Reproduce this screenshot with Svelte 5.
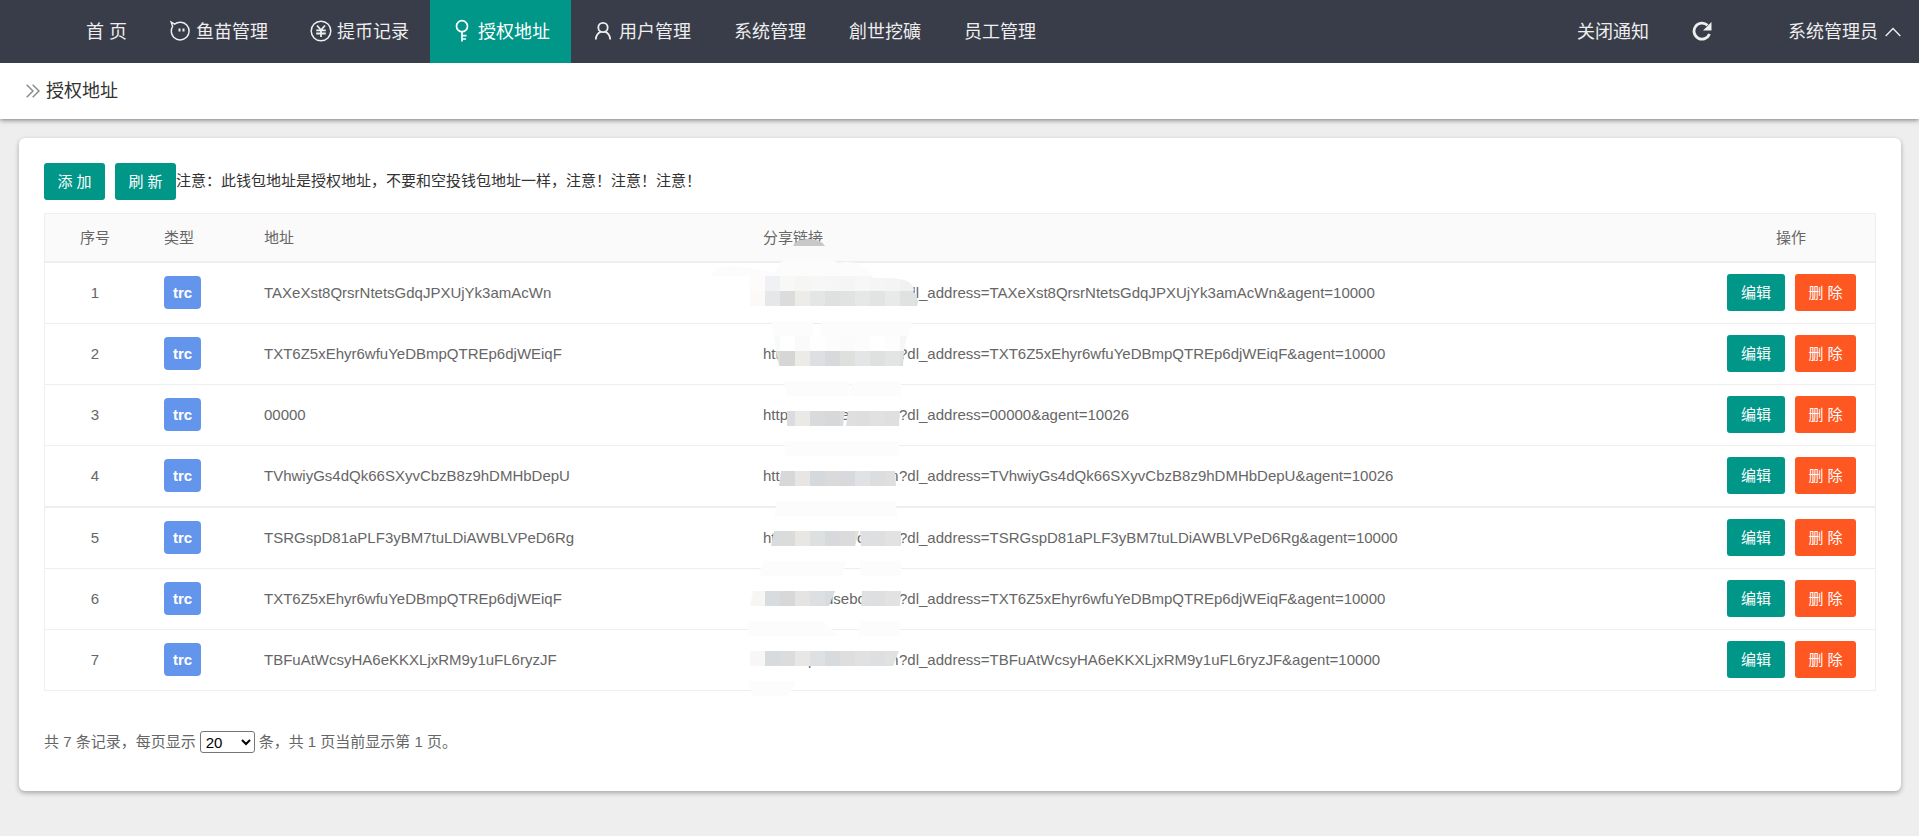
<script>
  const nav = [
    { label: '首 页' },
    { label: '鱼苗管理', icon: 'fish' },
    { label: '提币记录', icon: 'coin' },
    { label: '授权地址', icon: 'key', active: true },
    { label: '用户管理', icon: 'user' },
    { label: '系统管理' },
    { label: '創世挖礦' },
    { label: '员工管理' }
  ];

  // Each mask is drawn in a canvas whose origin is the top of its table row.
  // strips: clipping outline, top, first tile x and 15px tile colours.
  const rows = [
    {
      address: 'TAXeXst8QrsrNtetsGdqJPXUjYk3amAcWn', agent: 10000, texts: [],
      faint: ['M10 13C16 3 28 1 40 4L75 9 79 0Q81-2 85-2H134Q137-2 137 0Q163-5 173 13Z'],
      strips: [
        { clip: 'M50 13H172L173 15H190Q214 16 214 28H50Z', y: 13, x: 50, colors: ['#fdfcfa', '#eff1f4', '#f8f8f7', '#f6f6f5', '#f7f7f7', '#f6f6f6', '#f5f5f5', '#f7f7f7', '#f5f5f5', '#f4f4f4', '#f1f1f1'] },
        { clip: 'M50 28H213Q220 37 217 43H50Z', y: 28, x: 50, colors: ['#fbfaf8', '#e5e7e8', '#dcdcdc', '#eeece9', '#e3e5e7', '#dfe0e0', '#e1e2e2', '#e5e8e7', '#e2e3e3', '#e8e9e9', '#e0e1e1', '#dedfdf'] }
      ],
      cap: 'M93-17Q96-24 108-24Q121-24 125-17Z'
    },
    {
      address: 'TXT6Z5xEhyr6wfuYeDBmpQTREp6djWEiqF', agent: 10000, texts: [[63, 'htt']],
      faint: ['M72-3H113V12H75Z', 'M122-3H213L208 12H120Z'],
      strips: [
        { clip: 'M74 12H207L204 27H76Z', y: 12, x: 65, colors: ['#f6faf9', '#ffffff', '#fafafa', '#fefefe', '#fcfcfc', '#fbfbfb', '#fcfcfc', '#ffffff', '#fdfdfd', '#f6f6f6'] },
        { clip: 'M76 27H204L203 42H79Z', y: 27, x: 65, colors: ['#dcddde', '#d6d6d7', '#ecebe7', '#dedfe2', '#d8d9db', '#dfdfde', '#e3e5e6', '#dfe0e0', '#e2e5e4', '#dedfdf'] }
      ]
    },
    {
      address: '00000', agent: 10026, texts: [[63, 'http'], [141, 'e']],
      faint: ['M84-3H150L148 11H87Z', 'M152-3H201V11H149Z'],
      strips: [
        { clip: 'M87 26H145L143 41H87Z', y: 26, x: 80, colors: ['#dbdcdd', '#ebe9e6', '#d9dadc', '#d7d8d9', '#dbdcdd'] },
        { clip: 'M148 26H200L199 41H146Z', y: 26, x: 140, colors: ['#dedfdf', '#dededd', '#e0e1e1', '#dfdfdf', '#dfdfdf'] }
      ]
    },
    {
      address: 'TVhwiyGs4dQk66SXyvCbzB8z9hDMHbDepU', agent: 10026, texts: [[63, 'htt'], [186, 'm']],
      faint: ['M84-5H199L198 10H85Z'],
      strips: [
        { clip: 'M81 25H195L196 40H79Z', y: 25, x: 65, colors: ['#d9dadc', '#d8d8d8', '#e7e6e3', '#d6d9dc', '#dadada', '#d8d9dc', '#e0e2e3', '#dcddde', '#dedfe0'] }
      ]
    },
    {
      address: 'TSRGspD81aPLF3yBM7tuLDiAWBLVPeD6Rg', agent: 10000, texts: [[63, 'ht'], [157, 'o']],
      faint: ['M76-7H196L197 8H75Z'],
      strips: [
        { clip: 'M74 23H159L155 38H71Z', y: 23, x: 65, colors: ['#d9dcdf', '#dadbdb', '#e8e7e3', '#dde0e1', '#d8d9dd', '#dadbda', '#dee0e1'] },
        { clip: 'M160 23H201V38H161Z', y: 23, x: 155, colors: ['#dee0e1', '#dedfe0', '#e2e2e2', '#e0e1e1'] }
      ]
    },
    {
      address: 'TXT6Z5xEhyr6wfuYeDBmpQTREp6djWEiqF', agent: 10000, texts: [[125, 'usebo']],
      faint: ['M63-8H147L142 7H59Z', 'M160-8H201V7H161Z'],
      strips: [
        { clip: 'M53 22H135L129 37H50Z', y: 22, x: 50, colors: ['#f7f6f4', '#d8dcdf', '#d8d8d9', '#e6e4e2', '#dde0e3', '#d8dbdf'] },
        { clip: 'M162 22H201L200 37H161Z', y: 22, x: 155, colors: ['#dee0e1', '#dedfe0', '#e2e2e2', '#e0e1e1'] }
      ]
    },
    {
      address: 'TBFuAtWcsyHA6eKKXLjxRM9y1uFL6ryzJF', agent: 10000, texts: [[108, 'p'], [186, 'm']],
      faint: ['M48-9H121Q128-4 140 6H48Z', 'M159-9H200V6H159Z', 'M48 51H96L88 66H53Z'],
      strips: [
        { clip: 'M50 21H199L193 36H50Z', y: 21, x: 50, colors: ['#f8f7f5', '#d7dbdd', '#dcdcdc', '#e9e7e5', '#dee0e3', '#d8dbde', '#dddedd', '#dfe1e3', '#dedfe0', '#e0e1e1'] }
      ]
    }
  ];
</script>

<header class="topbar">
  <nav class="menu">
    {#each nav as item}
      <a href="#menu" class="menu-item" class:active={item.active}>
        {#if item.icon === 'fish'}
          <svg class="icon" viewBox="0 0 20 20"><path d="M1.200 1.200L4.600 3.200C8 .500 13.500.600 16.700 4C20 7.500 19.800 13 16.500 16.300C13 19.800 7 19.700 3.700 16.300C.800 13.200.600 8.500 2.600 5.300Z" /><path d="M9.500 7.500v3M13.500 7.500v3" stroke-width="2" /></svg>
        {:else if item.icon === 'coin'}
          <svg class="icon" viewBox="0 0 20 20"><circle cx="10" cy="10" r="9.800" /><path d="M6 4.500L10 9l4-4.500M5.200 9.300h9.600M5.200 12.500h9.600M10 9v7" stroke-width="1.800" /></svg>
        {:else if item.icon === 'key'}
          <svg class="icon" viewBox="0 0 20 20"><circle cx="10" cy="5.200" r="5.500" stroke-width="1.700" /><path d="M10 10.700V20.500M10 14.600h4.500M10 18h4" stroke-width="1.700" /></svg>
        {:else if item.icon === 'user'}
          <svg class="icon" viewBox="0 0 20 20"><circle cx="10" cy="6.500" r="4.700" stroke-width="1.800" /><path d="M2.800 18.500C3 14.500 4.800 12 7.700 10.800M12.300 10.800C15.200 12 17 14.500 17.200 18.500" stroke-width="1.800" /></svg>
        {/if}
        <span>{item.label}</span>
      </a>
    {/each}
  </nav>
  <div class="tools">
    <a href="#notice" class="tool">关闭通知</a>
    <button class="reload" aria-label="刷新页面">
      <svg viewBox="0 0 20 20"><path d="M17.500 13A8 8 0 1 1 15.500 4.300" fill="none" stroke="currentColor" stroke-width="2.800" /><path d="M19.500 1v8.500h-8.500z" fill="currentColor" /></svg>
    </button>
    <a href="#account" class="tool account">系统管理员
      <svg viewBox="0 0 16 10"><path d="M.700 9L8 1.500 15.300 9" fill="none" stroke="currentColor" stroke-width="1.400" /></svg>
    </a>
  </div>
</header>

<div class="crumb">
  <svg viewBox="0 0 14 14"><path d="M.700.700L7 7 .700 13.300M6.700.700L13 7l-6.300 6.300" fill="none" stroke="#888" stroke-width="1.400" /></svg>
  <span>授权地址</span>
</div>

<main class="card">
  <div class="actions">
    <button class="btn">添 加</button>
    <button class="btn">刷 新</button>
    <span class="notice">注意：此钱包地址是授权地址，不要和空投钱包地址一样，注意！注意！注意！</span>
  </div>

  <table>
    <colgroup>
      <col class="c-index" /><col class="c-type" /><col class="c-address" /><col /><col class="c-ops" />
    </colgroup>
    <thead>
      <tr><th class="center">序号</th><th>类型</th><th>地址</th><th>分享链接</th><th class="center">操作</th></tr>
    </thead>
    <tbody>
      {#each rows as row, i}
        <tr>
          <td class="center">{i + 1}</td>
          <td class="boxed"><span class="badge">trc</span></td>
          <td>{row.address}</td>
          <td class="link">
            <span class="query">?dl_address={row.address}&amp;agent={row.agent}</span>
            <svg class="mask" viewBox="0 0 260 61">
              {#each row.texts as [x, text]}
                <text {x} y="35">{text}</text>
              {/each}
              {#each row.faint as d}
                <path {d} fill="#fcfcfc" />
              {/each}
              {#each row.strips as strip, s}
                <clipPath id="m{i}-{s}"><path d={strip.clip} /></clipPath>
                <g clip-path="url(#m{i}-{s})">
                  {#each strip.colors as color, t}
                    <rect x={strip.x + t * 15} y={strip.y} width="15" height="15" fill={color} shape-rendering="crispEdges" />
                  {/each}
                </g>
              {/each}
              {#if row.cap}<path d={row.cap} fill="#c8c8c8" />{/if}
            </svg>
          </td>
          <td class="boxed">
            <div class="pair">
              <button class="btn edit">编辑</button>
              <button class="btn danger">删 除</button>
            </div>
          </td>
        </tr>
      {/each}
    </tbody>
  </table>

  <div class="pager">
    <label for="size">共 7 条记录，每页显示</label>
    <select id="size"><option>20</option><option>50</option><option>100</option></select>
    <span>条，共 1 页当前显示第 1 页。</span>
  </div>
</main>

<style>
  :global(body) {
    margin: 0;
    background: #eee;
    font: 15px/24px "Liberation Sans", "Noto Sans CJK SC", sans-serif;
    color: #333;
  }
  a {
    color: inherit;
    text-decoration: none;
  }
  button {
    border: 0;
    font: inherit;
    cursor: pointer;
  }
  .topbar {
    position: relative;
    z-index: 1;
    display: flex;
    justify-content: space-between;
    height: 63px;
    background: #393d49;
    color: #eee;
    font-size: 18px;
  }
  .menu {
    display: flex;
    padding-left: 64px;
  }
  .menu-item {
    display: flex;
    align-items: center;
    gap: 6px;
    padding: 0 21px 0 22px;
    white-space: nowrap;
  }
  .menu-item.active {
    background: #009688;
    color: #fff;
  }
  .icon {
    width: 20px;
    height: 20px;
    margin-bottom: 2px;
    overflow: visible;
    fill: none;
    stroke: currentColor;
    stroke-width: 1.500;
  }
  .tools {
    display: flex;
    align-items: center;
    padding-right: 18px;
    white-space: nowrap;
  }
  .reload {
    margin: 0 76px 2px 43px;
    padding: 0;
    background: none;
    color: inherit;
  }
  .reload svg {
    display: block;
    width: 20px;
    height: 20px;
  }
  .account {
    display: flex;
    align-items: center;
    gap: 7px;
  }
  .account svg {
    width: 16px;
    height: 10px;
  }
  .crumb {
    display: flex;
    align-items: center;
    gap: 6px;
    height: 56px;
    padding-left: 26px;
    background: #fff;
    box-shadow: 0 1px 5px rgba(0, 0, 0, 0.5);
    font-size: 18px;
  }
  .crumb svg {
    width: 14px;
    height: 14px;
  }
  .card {
    margin: 19px 18px 45px 19px;
    padding: 25px 25px 37px;
    border-radius: 6px;
    background: #fff;
    box-shadow: 0 2px 5px rgba(0, 0, 0, 0.3);
  }
  .actions {
    display: flex;
    align-items: center;
    margin-bottom: 13px;
  }
  .notice {
    padding-bottom: 2px;
  }
  .btn {
    min-width: 61px;
    height: 37px;
    padding: 0 13px;
    border-radius: 3px;
    background: #009688;
    color: #fff;
    white-space: nowrap;
  }
  .btn + .btn {
    margin-left: 10px;
  }
  .btn.edit {
    min-width: 58px;
  }
  .btn.danger {
    background: #ff5722;
  }
  table {
    width: 100%;
    border: 1px solid #eee;
    border-bottom: 0;
    border-spacing: 0;
    table-layout: fixed;
    color: #666;
  }
  .c-index,
  .c-type {
    width: 100px;
  }
  .c-address {
    width: 499px;
  }
  .c-ops {
    width: 168px;
  }
  th,
  td {
    box-sizing: border-box;
    height: 61px;
    padding: 0 19px;
    border-bottom: 1px solid #eee;
    text-align: left;
    font-weight: 400;
    white-space: nowrap;
  }
  th {
    height: 49px;
    border-bottom-width: 2px;
    background: #fafafa;
  }
  tbody tr:nth-child(4) td {
    height: 62px;
    border-bottom-width: 2px;
  }
  .center {
    text-align: center;
  }
  .boxed {
    padding-bottom: 1px;
  }
  .badge {
    display: block;
    width: max-content;
    padding: 0 9px;
    border-radius: 4px;
    background: #6495ed;
    color: #fff;
    font-weight: 700;
    line-height: 33px;
  }
  .link {
    position: relative;
  }
  .query {
    padding-left: 136px;
  }
  .mask {
    position: absolute;
    left: -44px;
    top: 0;
    width: 260px;
    height: 61px;
    overflow: visible;
    fill: #666;
    pointer-events: none;
  }
  .pair {
    display: flex;
    justify-content: flex-end;
  }
  .pager {
    display: flex;
    align-items: center;
    gap: 4px;
    margin-top: 39px;
    color: #666;
  }
  select {
    width: 55px;
    height: 22px;
    padding: 0 0 0 1px;
    border: 1px solid #767676;
    border-radius: 3px;
    background: #fff;
    color: #000;
    font: inherit;
    line-height: 20px;
  }
</style>
